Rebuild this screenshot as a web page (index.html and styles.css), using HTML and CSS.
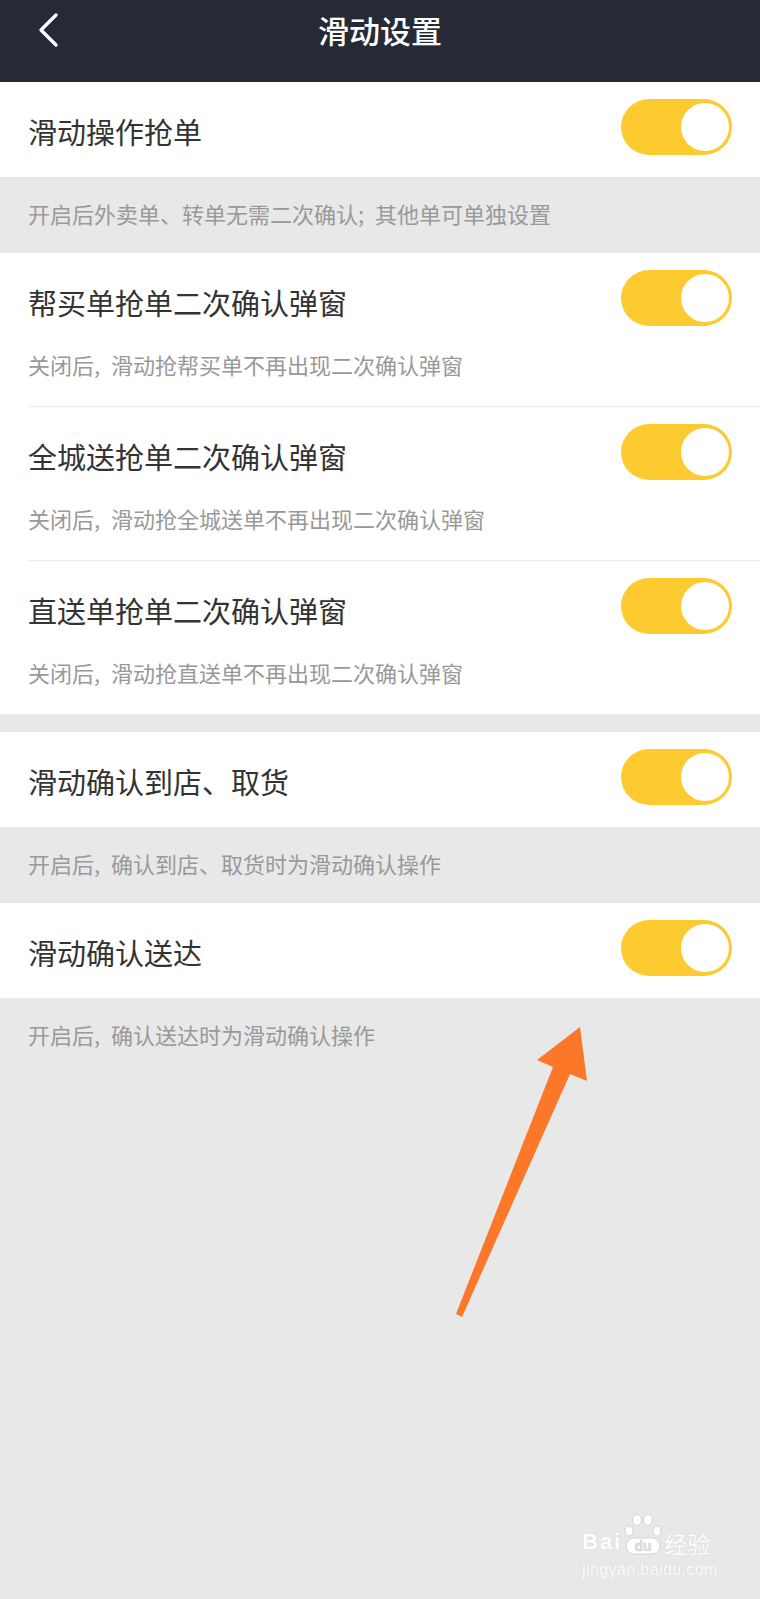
FILE: index.html
```html
<!DOCTYPE html>
<html lang="zh-CN">
<head>
  <meta charset="UTF-8" />
  <meta name="viewport" content="width=device-width, initial-scale=1" />
  <title>滑动设置</title>
  <link rel="stylesheet" href="styles.css">
</head>
<body>
  <div class="page">
    <header class="topbar">
      <a class="back" href="#">
        <svg width="24" height="36" viewBox="0 0 24 36"><polyline points="19,3 4,18 19,33" fill="none" stroke="#fff" stroke-width="3.4" stroke-linecap="round" stroke-linejoin="round"/></svg>
      </a>
      <h1 class="title">滑动设置</h1>
      <span></span>
    </header>

    <div class="row">
      <span class="label">滑动操作抢单</span>
      <span class="switch"><span class="knob"></span></span>
    </div>
    <p class="note">开启后外卖单、转单无需二次确认;&ensp;其他单可单独设置</p>

    <div class="group">
      <div class="item">
        <div class="row">
          <span class="label">帮买单抢单二次确认弹窗</span>
          <span class="switch"><span class="knob"></span></span>
        </div>
        <p class="desc">关闭后,&ensp;滑动抢帮买单不再出现二次确认弹窗</p>
      </div>
      <div class="item">
        <div class="row">
          <span class="label">全城送抢单二次确认弹窗</span>
          <span class="switch"><span class="knob"></span></span>
        </div>
        <p class="desc">关闭后,&ensp;滑动抢全城送单不再出现二次确认弹窗</p>
      </div>
      <div class="item last">
        <div class="row">
          <span class="label">直送单抢单二次确认弹窗</span>
          <span class="switch"><span class="knob"></span></span>
        </div>
        <p class="desc">关闭后,&ensp;滑动抢直送单不再出现二次确认弹窗</p>
      </div>
    </div>

    <div class="row spaced">
      <span class="label">滑动确认到店、取货</span>
      <span class="switch"><span class="knob"></span></span>
    </div>
    <p class="note">开启后,&ensp;确认到店、取货时为滑动确认操作</p>

    <div class="row">
      <span class="label">滑动确认送达</span>
      <span class="switch"><span class="knob"></span></span>
    </div>
    <p class="note">开启后,&ensp;确认送达时为滑动确认操作</p>

    <!-- annotation arrow drawn over the screenshot -->
    <svg class="arrow" width="760" height="1599" viewBox="0 0 760 1599">
      <polygon points="580,1027 587,1081 570,1074 462,1317 456,1314 553,1067 537,1060" fill="#fd7729"/>
    </svg>

    <div class="watermark">
      <div class="brand">
        <span class="bai">Bai</span>
        <svg class="paw" width="42" height="42" viewBox="0 0 42 42">
          <g fill="#fff" stroke="#d4d4d4" stroke-width="1">
            <ellipse cx="7" cy="17" rx="4" ry="5"/>
            <ellipse cx="15" cy="6" rx="4.5" ry="5.5"/>
            <ellipse cx="26" cy="6" rx="4.5" ry="5.5"/>
            <ellipse cx="35" cy="17" rx="4" ry="5"/>
            <rect x="4" y="24" width="34" height="16" rx="8"/>
          </g>
          <text x="21" y="37" text-anchor="middle" font-family="Liberation Sans" font-weight="bold" font-size="14" fill="#e2e2e2" stroke="#cfcfcf" stroke-width="0.5">du</text>
        </svg>
        <span class="jy">经验</span>
      </div>
      <div class="site">jingyan.baidu.com</div>
    </div>
  </div>
</body>
</html>
```

FILE: styles.css
```css
body { margin: 0; background: #e8e8e8; font-family: "Noto Sans CJK SC", "Noto Sans", sans-serif; }
.page { position: relative; width: 760px; min-height: 1599px; background: #e8e8e8; overflow: hidden; }

.topbar { height: 82px; background: #262a36; display: grid; grid-template-columns: 100px 1fr 100px; align-items: start; }
.back { display: block; margin: 12px 0 0 37px; width: 24px; height: 36px; }
.title { margin: 0; padding-top: 8px; text-align: center; color: #fff; font-size: 31px; font-weight: 500; line-height: 44px; }

.row { height: 95px; display: flex; align-items: center; justify-content: space-between; padding: 0 28px; background: #fff; }
.label { padding-top: 3px; font-size: 29px; color: #333; line-height: 40px; }
.switch { display: flex; justify-content: flex-end; align-items: center; width: 111px; height: 56px; margin-bottom: 5px; padding: 0 3px; box-sizing: border-box; border-radius: 28px; background: #fdca2f; }
.knob { width: 48px; height: 48px; border-radius: 50%; background: #fff; }

.note { margin: 0; padding: 21px 28px 25px; font-size: 22px; line-height: 30px; color: #999; }

.group { background: #fff; }
.item { margin-left: 28px; border-bottom: 1px solid #ececec; }
.item.last { border-bottom: none; }
.item .row { height: 94px; padding-left: 0; }
.desc { margin: 2px 0 0; padding-bottom: 27px; font-size: 22px; line-height: 30px; color: #999; }

.spaced { margin-top: 18px; }

.arrow { position: absolute; left: 0; top: 0; pointer-events: none; }

.watermark { position: absolute; left: 582px; top: 1514px; color: #fff; }
.brand { display: flex; align-items: flex-end; }
.bai { font-family: "Liberation Sans", sans-serif; font-weight: bold; font-size: 22px; line-height: 22px; letter-spacing: 2px; margin-bottom: 3px; text-shadow: 0 0 1px #c8c8c8; }
.paw { margin: 0 0 0 0; }
.jy { font-size: 23px; line-height: 26px; text-shadow: 0 0 1px #c8c8c8; }
.site { font-family: "Liberation Sans", sans-serif; font-size: 16px; margin-top: 5px; letter-spacing: 0.4px; text-shadow: 0 0 1px #c8c8c8; }
```
